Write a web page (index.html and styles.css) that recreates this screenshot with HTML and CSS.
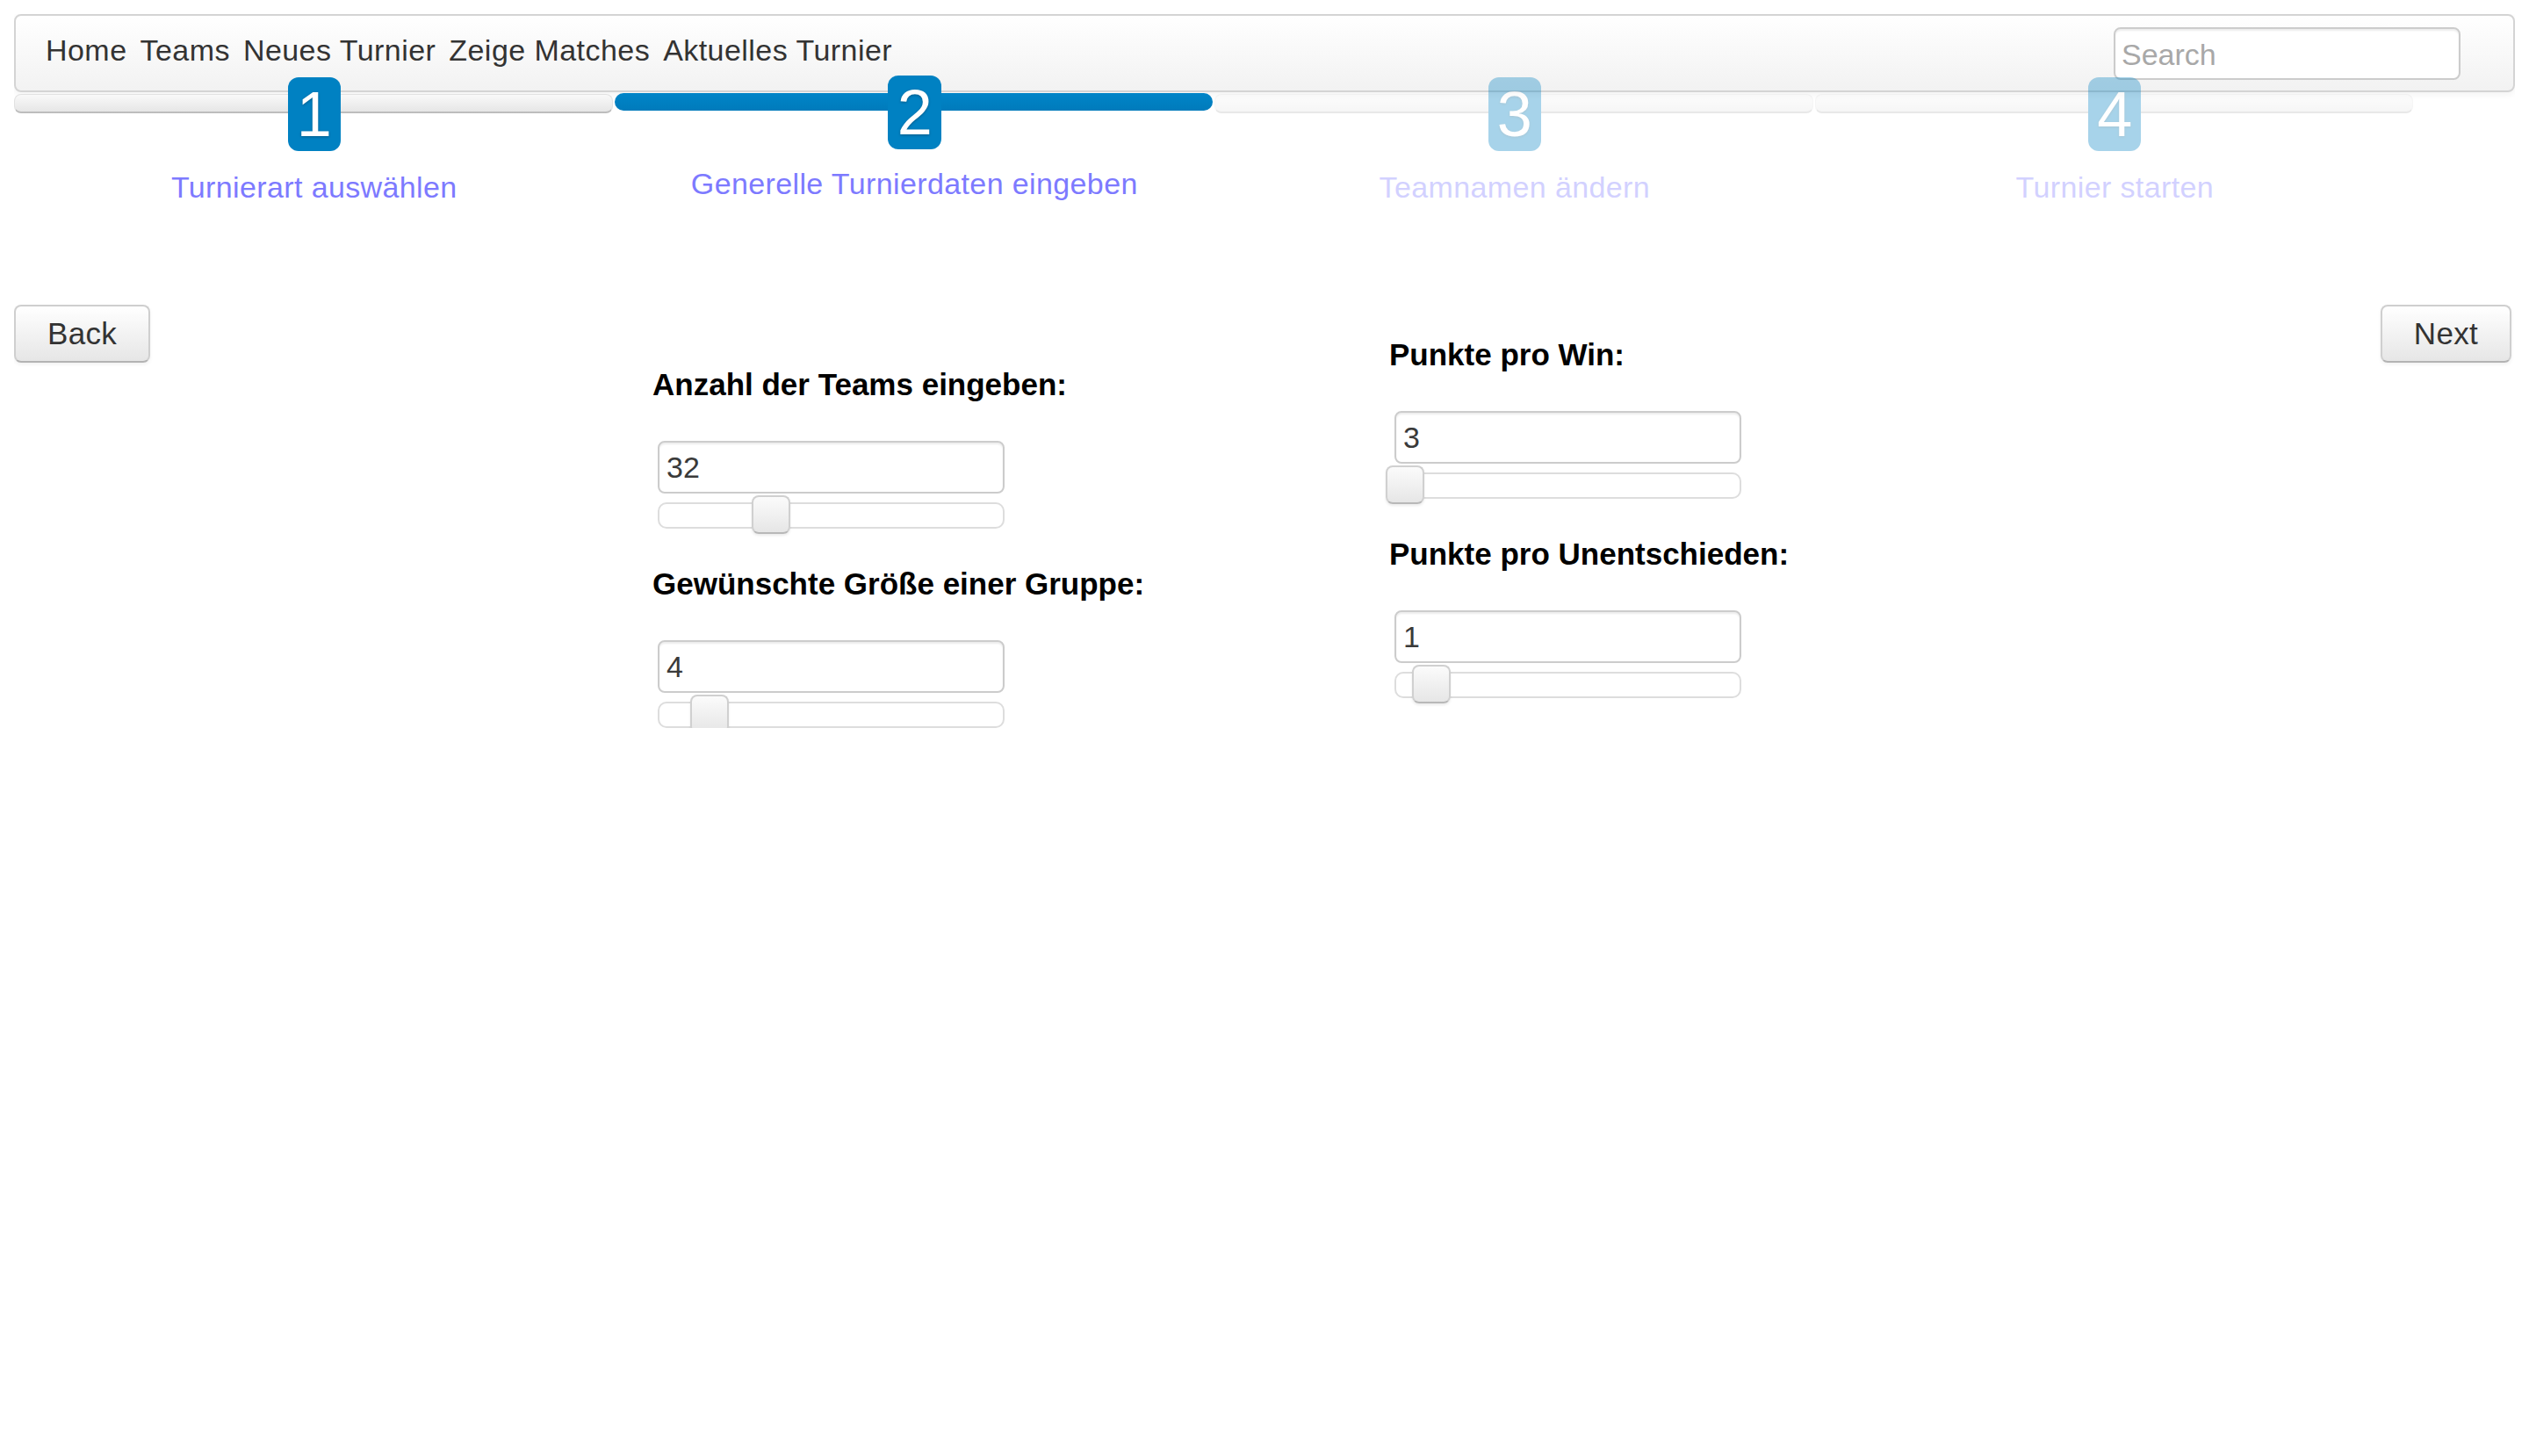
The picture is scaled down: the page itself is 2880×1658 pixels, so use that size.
FILE: index.html
```html
<!DOCTYPE html>
<html lang="de">
<head>
<meta charset="utf-8">
<title>Neues Turnier</title>
<link rel="stylesheet" href="styles.css">
</head>
<body>
<nav class="navbar">
  <ul class="nav-links">
    <li><a href="#">Home</a></li>
    <li><a href="#">Teams</a></li>
    <li><a href="#">Neues Turnier</a></li>
    <li><a href="#">Zeige Matches</a></li>
    <li><a href="#">Aktuelles Turnier</a></li>
  </ul>
  <input class="search" type="text" placeholder="Search">
</nav>

<div class="wizard">
  <div class="step done">
    <div class="bar"></div>
    <span class="badge">1</span>
    <div class="step-label">Turnierart auswählen</div>
  </div>
  <div class="step active">
    <div class="bar"></div>
    <span class="badge">2</span>
    <div class="step-label">Generelle Turnierdaten eingeben</div>
  </div>
  <div class="step disabled">
    <div class="bar"></div>
    <span class="badge">3</span>
    <div class="step-label">Teamnamen ändern</div>
  </div>
  <div class="step disabled">
    <div class="bar"></div>
    <span class="badge">4</span>
    <div class="step-label">Turnier starten</div>
  </div>
</div>

<main class="content">
  <button class="btn" type="button">Back</button>
  <form class="settings">
    <div class="col col-left">
      <div class="field">
        <label class="field-label">Anzahl der Teams eingeben:</label>
        <input class="field-input" type="text" value="32">
        <div class="slider"><span class="thumb" style="left:29.9%"></span></div>
      </div>
      <div class="field">
        <label class="field-label">Gewünschte Größe einer Gruppe:</label>
        <input class="field-input" type="text" value="4">
        <div class="slider"><span class="thumb" style="left:12%"></span></div>
      </div>
    </div>
    <div class="col col-right">
      <div class="field">
        <label class="field-label">Punkte pro Win:</label>
        <input class="field-input" type="text" value="3">
        <div class="slider"><span class="thumb" style="left:0%"></span></div>
      </div>
      <div class="field">
        <label class="field-label">Punkte pro Unentschieden:</label>
        <input class="field-input" type="text" value="1">
        <div class="slider"><span class="thumb" style="left:7.7%"></span></div>
      </div>
    </div>
  </form>
  <button class="btn btn-next" type="button">Next</button>
</main>
</body>
</html>
```
FILE: styles.css
```css
html, body {
  background: #ffffff;
}

body {
  margin: 16px;
  font-family: "Liberation Sans", Arial, Helvetica, sans-serif;
  font-size: 34px;
  color: #333333;
}

/* ---------- navbar ---------- */
.navbar {
  box-sizing: border-box;
  height: 89px;
  display: flex;
  align-items: center;
  justify-content: space-between;
  padding: 0 60px 0 34px;
  background: linear-gradient(#ffffff, #f2f2f2);
  border: 2px solid #d4d4d4;
  border-radius: 8px;
  box-shadow: 0 2px 8px rgba(0, 0, 0, 0.06);
}

.nav-links {
  display: flex;
  gap: 15px;
  list-style: none;
  margin: 0 0 7px 0;
  padding: 0;
  line-height: 40px;
  letter-spacing: 0.45px;
}

.nav-links a {
  color: #333333;
  text-decoration: none;
}

.search {
  box-sizing: border-box;
  width: 395px;
  height: 60px;
  margin: 0;
  padding: 4px 7px 0;
  font-family: inherit;
  font-size: 34px;
  color: #555555;
  background: #ffffff;
  border: 2px solid #cccccc;
  border-radius: 8px;
  box-shadow: inset 0 2px 2px rgba(0, 0, 0, 0.075);
  outline: none;
}

.search::placeholder {
  color: #a8a8a8;
}

/* ---------- wizard ---------- */
.wizard {
  display: flex;
  margin-top: 2px;
}

.step {
  position: relative;
  width: 24%;
  flex: 0 0 24%;
}

.bar {
  box-sizing: border-box;
  height: 22px;
  margin-right: 2px;
  border-radius: 8px;
  background: linear-gradient(#f9f9f9, #e6e6e6);
  border: 1px solid #e2e2e2;
  border-bottom: 2px solid #bdbdbd;
}

.step.active .bar {
  height: 20px;
  margin-top: -1px;
  margin-bottom: 3px;
  border: none;
  background: linear-gradient(#0085c8, #007bbb);
  border-radius: 10px;
}

.badge {
  position: absolute;
  top: -19px;
  left: 50%;
  width: 60px;
  height: 84px;
  margin-left: -30px;
  border-radius: 12px;
  background: #0081c2;
  color: #ffffff;
  font-size: 72px;
  line-height: 84px;
  text-align: center;
  text-shadow: 0 1px 3px rgba(0, 0, 0, 0.3);
}

.step.active .badge {
  top: -21px;
  width: 61px;
}

.step-label {
  margin-top: 64px;
  line-height: 40px;
  text-align: center;
  letter-spacing: 0.38px;
  color: #7d7aff;
}

.step.active .step-label {
  margin-top: 63px;
}

.step.disabled {
  opacity: 0.34;
}

/* ---------- content ---------- */
.content {
  display: flex;
  align-items: flex-start;
  margin-top: 114px;
}

.btn {
  box-sizing: border-box;
  height: 66px;
  padding: 0 36px;
  font-family: inherit;
  font-size: 35px;
  letter-spacing: 0.3px;
  color: #333333;
  background: linear-gradient(#ffffff, #e6e6e6);
  border: 2px solid #cfcfcf;
  border-bottom-color: #b3b3b3;
  border-radius: 8px;
  box-shadow: inset 0 2px 0 rgba(255, 255, 255, 0.2), 0 2px 4px rgba(0, 0, 0, 0.06);
  cursor: pointer;
}

.btn-next {
  margin-left: auto;
  margin-right: 4px;
}

.settings {
  display: flex;
  margin: 0 0 0 572px;
}

.col-left {
  width: 839px;
  margin-top: 71px;
}

.col-right {
  margin-top: 37px;
}

.field + .field {
  margin-top: 43px;
}

.field-label {
  display: block;
  font-size: 35px;
  font-weight: bold;
  line-height: 40px;
  color: #000000;
  margin-bottom: 44px;
}

.field-input {
  display: block;
  box-sizing: border-box;
  width: 395px;
  height: 60px;
  margin: 0 0 0 6px;
  padding: 0 8px;
  font-family: inherit;
  font-size: 34px;
  color: #3a3a3a;
  background: #ffffff;
  border: 2px solid #cccccc;
  border-radius: 8px;
  box-shadow: inset 0 2px 2px rgba(0, 0, 0, 0.075);
  outline: none;
}

.slider {
  position: relative;
  box-sizing: border-box;
  width: 395px;
  height: 30px;
  margin: 10px 0 0 6px;
  background: #ffffff;
  border: 2px solid #dddddd;
  border-radius: 10px;
}

.thumb {
  position: absolute;
  top: -10px;
  box-sizing: border-box;
  width: 44px;
  height: 44px;
  margin-left: -12px;
  background: linear-gradient(#fbfbfb, #e6e6e6);
  border: 2px solid #d0d0d0;
  border-bottom-color: #b8b8b8;
  border-radius: 8px;
  box-shadow: 0 2px 3px rgba(0, 0, 0, 0.08);
}
```
